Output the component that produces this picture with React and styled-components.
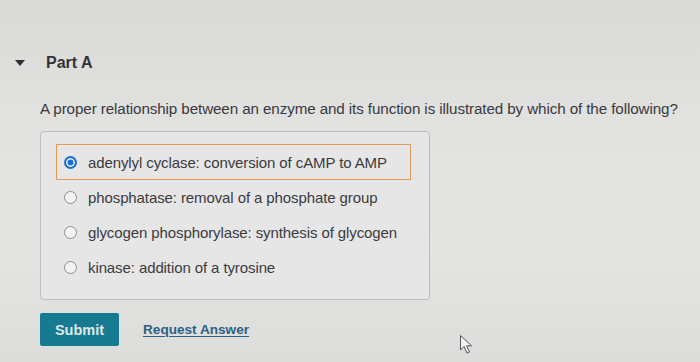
import styled, { createGlobalStyle } from "styled-components";

const GlobalStyle = createGlobalStyle`
    html, body {
        margin: 0;
        padding: 0;
    }
    body {
        width: 700px;
        height: 362px;
        overflow: hidden;
        font-family: "Liberation Sans", Arial, sans-serif;
        color: #3a3a3c;
    }
`

const Page = styled.div`
    position: relative;
    width: 700px;
    height: 362px;
    box-sizing: border-box;
    padding: 52px 0 0 0;
    background: linear-gradient(180deg, #d9d9d8 0%, #e2e2e1 35%, #e4e4e3 70%, #dcdcdb 100%);
`

const PartHeader = styled.div`
    display: flex;
    align-items: center;
    height: 22px;
    padding-left: 15px;
`

const Caret = styled.span`
    width: 0;
    height: 0;
    border-left: 5px solid transparent;
    border-right: 5px solid transparent;
    border-top: 6px solid #2f2f33;
    margin-right: 21px;
`

const PartTitle = styled.h2`
    margin: 0;
    font-size: 16px;
    font-weight: 700;
    color: #333336;
`

const Question = styled.p`
    margin: 25px 0 0 40px;
    font-size: 15.2px;
    line-height: 20px;
    color: #3a3a3d;
    letter-spacing: -0.1px;
`

const OptionsBox = styled.div`
    margin: 12px 0 0 40px;
    width: 390px;
    height: 169px;
    box-sizing: border-box;
    border: 1px solid #bdbdbf;
    border-radius: 4px;
    background: #e6e6e6;
    padding: 12px 18px 0 15px;
    display: flex;
    flex-direction: column;
`

const Option = styled.label`
    display: flex;
    align-items: center;
    gap: 11px;
    height: 36px;
    box-sizing: border-box;
    padding-left: 4px;
    border: 1.5px solid ${p => (p.$selected ? "#e39a5a" : "transparent")};
    font-size: 15px;
    color: #3b3b3e;
    letter-spacing: -0.1px;
    & + & {
        margin-top: -1px;
    }
`

const Radio = styled.span`
    width: 13px;
    height: 13px;
    border-radius: 50%;
    box-sizing: border-box;
    flex: none;
    margin-left: 3px;
    ${p => p.$checked
        ? `background: #1c6fd0; border: 2px solid #1c6fd0; box-shadow: inset 0 0 0 1.5px #f4f7fb;`
        : `background: #f2f2f2; border: 1.5px solid #8d8d90;`}
`

const Actions = styled.div`
    display: flex;
    align-items: center;
    gap: 24px;
    margin: 13px 0 0 40px;
`

const SubmitButton = styled.button`
    width: 79px;
    height: 33px;
    border: none;
    border-radius: 2px;
    background: #167a90;
    color: #dfe7ea;
    font-family: "Liberation Sans", Arial, sans-serif;
    font-size: 14.5px;
    font-weight: 700;
    cursor: pointer;
`

const RequestLink = styled.a`
    font-size: 13.6px;
    font-weight: 700;
    color: #2b6283;
    text-decoration: underline;
    text-underline-offset: 2px;
`

const Cursor = styled.svg`
    position: absolute;
    left: 459px;
    top: 334px;
`

const options = [
    "adenylyl cyclase: conversion of cAMP to AMP",
    "phosphatase: removal of a phosphate group",
    "glycogen phosphorylase: synthesis of glycogen",
    "kinase: addition of a tyrosine",
]

const App = () => {
    return (
        <>
            <GlobalStyle />
            <Page>
                <PartHeader>
                    <Caret />
                    <PartTitle>Part A</PartTitle>
                </PartHeader>
                <Question>
                    A proper relationship between an enzyme and its function is illustrated by which of the following?
                </Question>
                <OptionsBox>
                    {options.map((text, i) => (
                        <Option key={text} $selected={i === 0}>
                            <Radio $checked={i === 0} />
                            {text}
                        </Option>
                    ))}
                </OptionsBox>
                <Actions>
                    <SubmitButton>Submit</SubmitButton>
                    <RequestLink>Request Answer</RequestLink>
                </Actions>
                <Cursor width="16" height="22" viewBox="0 0 16 22">
                    <path
                        d="M1.5 1.5 L1.5 16 L5 12.5 L8 19 L10.5 18 L7.6 11.8 L12.5 11.8 Z"
                        fill="#f4f4f4"
                        stroke="#555"
                        strokeWidth="1"
                        strokeLinejoin="round"
                    />
                </Cursor>
            </Page>
        </>
    )
}

export default App
